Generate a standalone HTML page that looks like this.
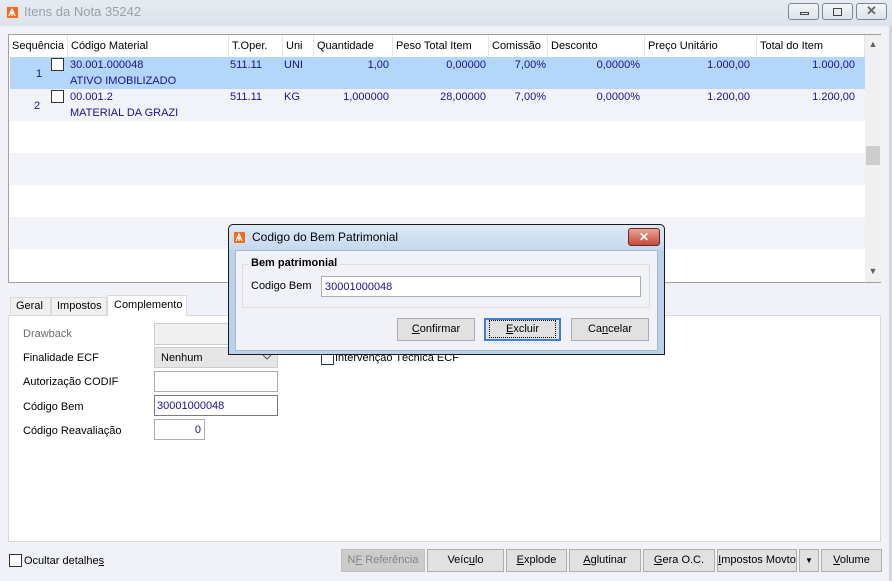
<!DOCTYPE html>
<html><head><meta charset="utf-8"><style>
*{box-sizing:border-box;margin:0;padding:0}
body{width:892px;height:581px;position:relative;overflow:hidden;background:#f0f2f7;font-family:"Liberation Sans",sans-serif;font-size:11px;color:#000}
.a{position:absolute}
.tb{left:0;top:0;width:892px;height:26px;background:linear-gradient(#e6ebf1,#dce3ea);}
.logo{width:13px;height:13px;background:#f36b21;border:1px solid #e0e0e0}
.wbtn{top:3px;height:17px;border:1px solid #7d8896;border-radius:3px;background:linear-gradient(#f4f6f8,#dde3e9)}
.grid{left:8px;top:34px;width:873px;height:249px;background:#fff;border:1px solid #a0a0a0}
.hd{top:0;height:22px;line-height:22px;padding-left:3px;border-right:1px solid #e5e5e5;color:#000}
.row{left:1px;width:855px;height:32px}
.c{color:#1a0f9a;line-height:13px}
.cb{width:13px;height:13px;border:1px solid #333;background:#fff}
.btn{height:23px;border:1px solid #adadad;background:#e1e1e1;text-align:center;line-height:21px}
.inp{height:21px;border:1px solid #abadb3;background:#fff;padding-left:2px;line-height:21px;color:#1a0f9a}
u{text-decoration:underline}
</style></head><body>
<div class="a tb"></div>
<div class="a logo" style="left:6px;top:6px"><svg width="11" height="11"><path d="M2 9L5 2L8 9M3 6H7M5 5V9" stroke="#fff" stroke-width="1.3" fill="none"/></svg></div>
<div class="a" style="left:24px;top:4px;font-size:13px;color:#9aa1a9;line-height:16px">Itens da Nota 35242</div>
<div class="a wbtn" style="left:788px;width:31px"><div class="a" style="left:11px;top:8px;width:9px;height:3px;border:1px solid #444"></div></div>
<div class="a wbtn" style="left:822px;width:31px"><div class="a" style="left:10px;top:4px;width:9px;height:8px;border:1px solid #444"></div></div>
<div class="a wbtn" style="left:856px;width:31px;color:#666;text-align:center;font-size:13px;line-height:14px;font-weight:bold">✕</div>
<div class="a" style="left:889px;top:26px;width:3px;height:555px;background:#cfd6df"></div>

<div class="a grid">
 <div class="a hd" style="left:0;width:59px">Sequência</div>
 <div class="a hd" style="left:59px;width:161px">Código Material</div>
 <div class="a hd" style="left:220px;width:54px">T.Oper.</div>
 <div class="a hd" style="left:274px;width:31px">Uni</div>
 <div class="a hd" style="left:305px;width:79px">Quantidade</div>
 <div class="a hd" style="left:384px;width:96px">Peso Total Item</div>
 <div class="a hd" style="left:480px;width:59px">Comissão</div>
 <div class="a hd" style="left:539px;width:97px">Desconto</div>
 <div class="a hd" style="left:636px;width:112px">Preço Unitário</div>
 <div class="a hd" style="left:748px;width:108px">Total do Item</div>
 <div class="a row" style="top:22px;background:#b2d7fa"></div>
 <div class="a row" style="top:54px;background:#f2f3f9"></div>
 <div class="a row" style="top:118px;background:#f2f3f9"></div>
 <div class="a row" style="top:182px;background:#f2f3f9"></div>
 <div class="a c" style="left:27px;top:33px">1</div>
 <div class="a cb" style="left:42px;top:23px"></div>
 <div class="a c" style="left:61px;top:24px">30.001.000048</div>
 <div class="a c" style="left:61px;top:40px">ATIVO IMOBILIZADO</div>
 <div class="a c" style="left:221px;top:24px">511.11</div>
 <div class="a c" style="left:275px;top:24px">UNI</div>
 <div class="a c" style="left:305px;top:24px;width:75px;text-align:right">1,00</div>
 <div class="a c" style="left:384px;top:24px;width:93px;text-align:right">0,00000</div>
 <div class="a c" style="left:480px;top:24px;width:57px;text-align:right">7,00%</div>
 <div class="a c" style="left:539px;top:24px;width:92px;text-align:right">0,0000%</div>
 <div class="a c" style="left:636px;top:24px;width:105px;text-align:right">1.000,00</div>
 <div class="a c" style="left:748px;top:24px;width:98px;text-align:right">1.000,00</div>
 <div class="a c" style="left:25px;top:65px">2</div>
 <div class="a cb" style="left:42px;top:55px"></div>
 <div class="a c" style="left:61px;top:56px">00.001.2</div>
 <div class="a c" style="left:61px;top:72px">MATERIAL DA GRAZI</div>
 <div class="a c" style="left:221px;top:56px">511.11</div>
 <div class="a c" style="left:275px;top:56px">KG</div>
 <div class="a c" style="left:305px;top:56px;width:75px;text-align:right">1,000000</div>
 <div class="a c" style="left:384px;top:56px;width:93px;text-align:right">28,00000</div>
 <div class="a c" style="left:480px;top:56px;width:57px;text-align:right">7,00%</div>
 <div class="a c" style="left:539px;top:56px;width:92px;text-align:right">0,0000%</div>
 <div class="a c" style="left:636px;top:56px;width:105px;text-align:right">1.200,00</div>
 <div class="a c" style="left:748px;top:56px;width:98px;text-align:right">1.200,00</div>
 <div class="a" style="left:856px;top:0;width:16px;height:247px;background:#f0f0f0"></div>
 <div class="a" style="left:857px;top:111px;width:14px;height:19px;background:#cdcdcd"></div>
 <div class="a" style="left:856px;top:4px;width:16px;text-align:center;color:#606060;font-size:9px">▲</div>
 <div class="a" style="left:856px;top:231px;width:16px;text-align:center;color:#606060;font-size:9px">▼</div>
</div>

<div class="a" style="left:8px;top:315px;width:873px;height:227px;background:#fff;border:1px solid #d9d9d9"></div>
<div class="a" style="left:10px;top:297px;width:41px;height:19px;border:1px solid #d9d9d9;background:#f0f0f0;line-height:17px;padding-left:5px">Geral</div>
<div class="a" style="left:51px;top:297px;width:56px;height:19px;border:1px solid #d9d9d9;background:#f0f0f0;line-height:17px;padding-left:5px">Impostos</div>
<div class="a" style="left:107px;top:295px;width:80px;height:21px;border:1px solid #d9d9d9;border-bottom:none;background:#fff;line-height:18px;padding-left:6px">Complemento</div>

<div class="a" style="left:23px;top:328px;color:#6d6d6d">Drawback</div>
<div class="a" style="left:154px;top:323px;width:124px;height:22px;background:#f0f0f0;border:1px solid #ccc"></div>
<div class="a" style="left:23px;top:352px">Finalidade ECF</div>
<div class="a" style="left:154px;top:347px;width:124px;height:21px;background:#e5e5e5;border:1px solid #ccc;padding-left:6px;line-height:21px">Nenhum</div>
<svg class="a" style="left:262px;top:354px" width="10" height="6"><path d="M1 1L5 5L9 1" stroke="#555" fill="none"/></svg>
<div class="a" style="left:23px;top:376px">Autorização CODIF</div>
<div class="a inp" style="left:154px;top:371px;width:124px"></div>
<div class="a" style="left:23px;top:401px">Código Bem</div>
<div class="a inp" style="left:154px;top:395px;width:124px;border-color:#7a7a7a">30001000048</div>
<div class="a" style="left:23px;top:425px">Código Reavaliação</div>
<div class="a inp" style="left:154px;top:419px;width:51px;text-align:right;padding-right:3px">0</div>
<div class="a cb" style="left:321px;top:352px"></div>
<div class="a" style="left:335px;top:352px">Intervenção Técnica ECF</div>

<div class="a cb" style="left:9px;top:554px"></div>
<div class="a" style="left:24px;top:555px">Ocultar detalhe<u>s</u></div>
<div class="a btn" style="left:341px;top:549px;width:84px;background:#cccccc;border-color:#bfbfbf;color:#838383">N<u>F</u> Referência</div>
<div class="a btn" style="left:427px;top:549px;width:77px">Veíc<u>u</u>lo</div>
<div class="a btn" style="left:506px;top:549px;width:61px"><u>E</u>xplode</div>
<div class="a btn" style="left:569px;top:549px;width:72px"><u>A</u>glutinar</div>
<div class="a btn" style="left:643px;top:549px;width:72px"><u>G</u>era O.C.</div>
<div class="a btn" style="left:717px;top:549px;width:80px"><u>I</u>mpostos Movto</div>
<div class="a btn" style="left:799px;top:549px;width:20px;font-size:8px">▼</div>
<div class="a btn" style="left:821px;top:549px;width:61px"><u>V</u>olume</div>

<div class="a" style="left:228px;top:224px;width:437px;height:131px;border:1px solid #1a1a1a;background:#b9d1ea;border-radius:5px 5px 0 0"></div>
<div class="a" style="left:229px;top:225px;width:435px;height:25px;background:linear-gradient(#dde9f5,#c4d8ee);border-radius:5px 5px 0 0"></div>
<div class="a logo" style="left:233px;top:231px"><svg width="11" height="11"><path d="M2 9L5 2L8 9M3 6H7M5 5V9" stroke="#fff" stroke-width="1.3" fill="none"/></svg></div>
<div class="a" style="left:252px;top:230px;font-size:12px;line-height:15px">Codigo do Bem Patrimonial</div>
<div class="a" style="left:628px;top:228px;width:32px;height:18px;border:1px solid #6b2a22;border-radius:3px;background:linear-gradient(#e8a494,#c44a36);color:#fff;text-align:center;font-weight:bold;font-size:12px;line-height:16px">✕</div>
<div class="a" style="left:235px;top:250px;width:423px;height:101px;background:#f0f2f7;border:1px solid #a5b8cf"></div>
<div class="a" style="left:242px;top:264px;width:408px;height:44px;border:1px solid #dcdcdc"></div>
<div class="a" style="left:248px;top:257px;font-weight:bold;background:#f0f2f7;padding:0 3px">Bem patrimonial</div>
<div class="a" style="left:251px;top:280px">Codigo Bem</div>
<div class="a inp" style="left:321px;top:276px;width:320px;height:21px;padding-left:3px;border-color:#abadb3">30001000048</div>
<div class="a btn" style="left:397px;top:318px;width:78px"><u>C</u>onfirmar</div>
<div class="a btn" style="left:484px;top:318px;width:77px;border:2px solid #3c7fd0;line-height:19px"><span style="outline:1px dotted #000;outline-offset:2px;padding:0 14px"><u>E</u>xcluir</span></div>
<div class="a btn" style="left:571px;top:318px;width:78px">Ca<u>n</u>celar</div>
</body></html>
